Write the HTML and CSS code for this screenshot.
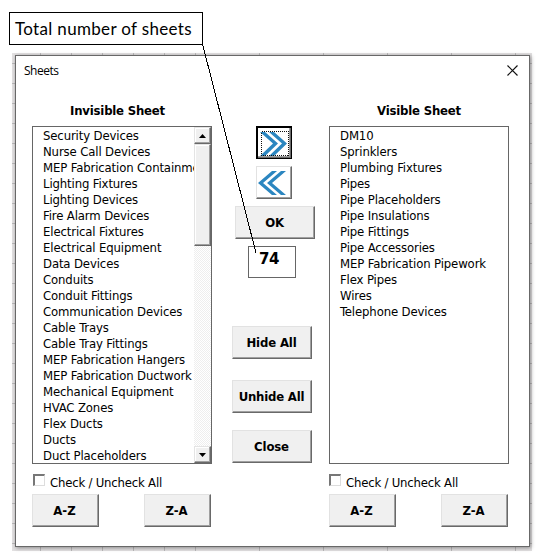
FILE: index.html
```html
<!DOCTYPE html>
<html lang="en">
<head>
<meta charset="utf-8">
<title>Sheets</title>
<link rel="stylesheet" href="styles.css">
</head>
<body>
<div class="callout"><span>Total number of sheets</span></div>
<div class="backdrop">
  <svg class="cells" width="520" height="498" shape-rendering="crispEdges" stroke="#bbb9ba" fill="none">
    <path d="M28.5 0V498M59.5 0V498M90.5 0V498M121.5 0V498M152.5 0V498M183.5 0V498M247.5 0V498M311.5 0V498M375.5 0V498M439.5 0V498M503.5 0V498"/>
    <path d="M0 10.5H520M0 30.5H520M0 50.5H520M0 70.5H520M0 90.5H520M0 110.5H520M0 130.5H520M0 150.5H520M0 170.5H520M0 190.5H520M0 210.5H520M0 230.5H520M0 250.5H520M0 270.5H520M0 290.5H520M0 310.5H520M0 330.5H520M0 350.5H520M0 370.5H520M0 390.5H520M0 410.5H520M0 430.5H520M0 450.5H520M0 470.5H520M0 490.5H520"/>
  </svg>
  <main class="dialog">
    <header class="titlebar">
      <span class="title">Sheets</span>
      <svg width="11" height="11" viewBox="0 0 11 11" stroke="#111" stroke-width="1.15"><path d="M.5 .5l10 10M10.5 .5l-10 10"/></svg>
    </header>
    <div class="content">
      <section class="side">
        <h2 class="left-heading">Invisible Sheet</h2>
        <div class="listbox">
          <ul>
            <li>Security Devices</li><li>Nurse Call Devices</li><li>MEP Fabrication Containment</li><li>Lighting Fixtures</li><li>Lighting Devices</li><li>Fire Alarm Devices</li><li>Electrical Fixtures</li><li>Electrical Equipment</li><li>Data Devices</li><li>Conduits</li><li>Conduit Fittings</li><li>Communication Devices</li><li>Cable Trays</li><li>Cable Tray Fittings</li><li>MEP Fabrication Hangers</li><li>MEP Fabrication Ductwork</li><li>Mechanical Equipment</li><li>HVAC Zones</li><li>Flex Ducts</li><li>Ducts</li><li>Duct Placeholders</li>
          </ul>
          <div class="scrollbar">
            <div class="arrow"><svg width="7" height="4"><path d="M0 4L3.5 0L7 4z"/></svg></div>
            <div class="thumb"></div>
            <div class="arrow down"><svg width="7" height="4"><path d="M0 0L3.5 4L7 0z"/></svg></div>
          </div>
        </div>
        <label class="check"><i></i><span>Check / Uncheck All</span></label>
        <div class="sorts"><button>A-Z</button><button>Z-A</button></div>
      </section>
      <section class="middle">
        <button class="move focused"><svg width="32" height="29" viewBox="0 0 32 29" fill="#2b86c0"><path d="M1 3H6L19 14.5L6 27H1L14 14.5z"/><path d="M10 3H15L28 14.5L15 27H10L23 14.5z"/><rect x="2.5" y="2.5" width="27" height="24" fill="none" stroke="#111" stroke-dasharray="1 1" shape-rendering="crispEdges"/></svg></button>
        <button class="move back"><svg width="32" height="29" viewBox="0 0 32 29" fill="#2b86c0"><path d="M19 3H14L0 15L14 27H19L5 15z"/><path d="M28 3H23L9 15L23 27H28L14 15z"/></svg></button>
        <button class="wide ok">OK</button>
        <div class="count">74</div>
        <button class="wide hide">Hide All</button>
        <button class="wide unhide">Unhide All</button>
        <button class="wide close">Close</button>
      </section>
      <section class="side">
        <h2>Visible Sheet</h2>
        <div class="listbox">
          <ul>
            <li>DM10</li><li>Sprinklers</li><li>Plumbing Fixtures</li><li>Pipes</li><li>Pipe Placeholders</li><li>Pipe Insulations</li><li>Pipe Fittings</li><li>Pipe Accessories</li><li>MEP Fabrication Pipework</li><li>Flex Pipes</li><li>Wires</li><li>Telephone Devices</li>
          </ul>
        </div>
        <label class="check"><i></i><span>Check / Uncheck All</span></label>
        <div class="sorts"><button>A-Z</button><button>Z-A</button></div>
      </section>
    </div>
  </main>
</div>
<svg class="leader" width="60" height="215" shape-rendering="crispEdges"><path d="M2.5 0L56 209" stroke="#000"/></svg>
</body>
</html>
```
FILE: styles.css
```css
* { box-sizing: border-box; }
body { margin: 0; width: 544px; height: 559px; overflow: hidden; background: #fff; color: #000; font: 13px/16px "DejaVu Sans Condensed", "DejaVu Sans", sans-serif; font-stretch: condensed; }
svg { display: block; }
.callout { width: 194px; height: 33px; margin: 12px 0 8px 9px; border: 1px solid #000; padding-left: 5px; font: 17px/32px Lato, sans-serif; font-stretch: normal; letter-spacing: .33px; white-space: nowrap; }
.backdrop { position: relative; width: 520px; height: 498px; margin-left: 12px; padding: 2px 0 0 3px; background: #e3e1e2; }
.cells { position: absolute; left: 0; top: 0; }
.dialog { position: relative; width: 515px; height: 492px; border: 1px solid #686868; background: #fff; box-shadow: 1px 1px 4px #0006; }
.titlebar { display: flex; justify-content: space-between; padding: 9px 11px 0 8px; height: 45px; }
.title { font: 12px/12px "Open Sans", sans-serif; font-stretch: normal; letter-spacing: -.5px; }
.content { display: flex; padding-left: 16px; }
.side { width: 180px; }
h2 { margin: 0; height: 25px; font-size: 13px; line-height: 19px; text-align: center; font-weight: bold; letter-spacing: -.2px; }
.left-heading { padding-right: 9px; }
.listbox { display: flex; width: 180px; height: 338px; border: 1px solid #666; }
ul { flex: 1; min-width: 0; overflow: hidden; list-style: none; margin: 0; padding: 1px 0 0 10px; }
li { height: 16px; line-height: 16px; white-space: nowrap; letter-spacing: -.13px; }
.scrollbar { display: flex; flex-direction: column; width: 17px; background: repeating-conic-gradient(#eee 0 25%, #fff 0 50%) 0 0 / 2px 2px; }
.arrow, .thumb { background: #f0f0f0; border: 1px solid #e4e4e4; border-right-color: #696969; border-bottom-color: #696969; box-shadow: inset -1px -1px #a0a0a0, inset 1px 1px #fff; }
.arrow { display: flex; align-items: center; justify-content: center; height: 17px; }
.thumb { height: 102px; }
.down { margin-top: auto; }
.check { display: flex; align-items: center; height: 18px; margin-top: 9px; padding-left: 1px; letter-spacing: -.2px; white-space: nowrap; }
.check span { padding-top: 1px; }
.check i { width: 12px; height: 12px; margin: -4px 5px 0 0; border: 1px solid #ddd; border-top: 2px solid #777; border-left: 2px solid #777; }
.middle + .side .check { padding-left: 0; }
.sorts { display: flex; justify-content: space-between; padding-right: 1px; margin-top: 3px; }
button { display: flex; align-items: center; justify-content: center; width: 67px; height: 33px; padding: 0 2px 0 0; border: 1px solid #e2e2e2; border-right-color: #696969; border-bottom-color: #696969; box-shadow: inset -1px -1px #a0a0a0; background: #f0f0f0; color: #000; font: bold 13px/16px "DejaVu Sans Condensed", "DejaVu Sans", sans-serif; font-stretch: condensed; white-space: nowrap; }
.middle { width: 117px; padding: 25px 0 0 20px; }
.move { width: 36px; margin-left: 24px; background: #fff; padding: 0; }
.focused { border: 2px solid #000; border-right-width: 1px; border-bottom-width: 1px; box-shadow: inset -1px -1px #696969, inset -2px -2px #a0a0a0; }
.back { margin-top: 7px; }
.wide { width: 80px; padding-right: 1px; letter-spacing: -.15px; }
.ok { margin: 7px 0 0 3px; }
.count { width: 48px; height: 32px; margin: 7px 0 0 16px; border: 1px solid #666; padding-left: 10px; font: bold 15px/24px "DejaVu Sans", sans-serif; font-stretch: normal; letter-spacing: -.4px; }
.hide { margin-top: 48px; }
.unhide { margin-top: 21px; letter-spacing: -.2px; }
.close { margin-top: 17px; }
.leader { position: absolute; left: 200px; top: 44px; }
```
